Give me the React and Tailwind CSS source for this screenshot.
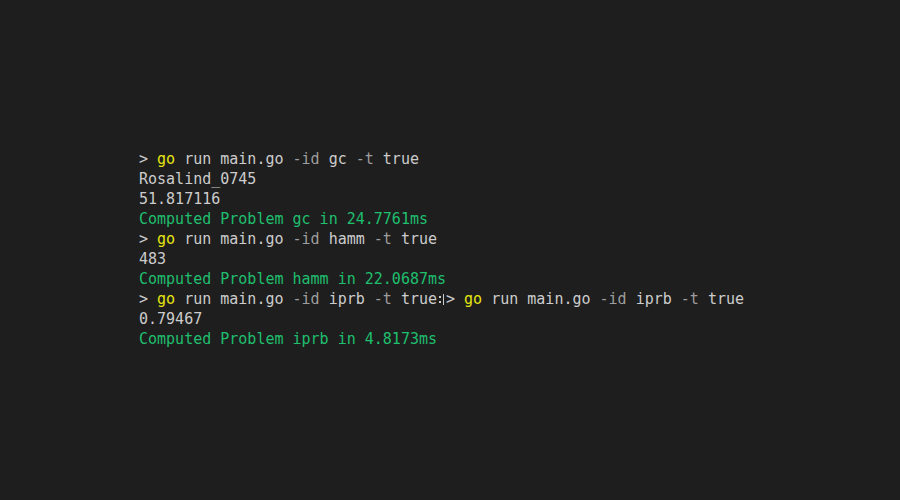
export default function App() {
  const Cmd = ({ id }) => (
    <>
      <span className="text-[#cccccc]">&gt; </span>
      <span className="text-[#e5e510]">go</span>
      <span className="text-[#cccccc]"> run main.go </span>
      <span className="text-[#9d9d9d]">-id</span>
      <span className="text-[#cccccc]"> {id} </span>
      <span className="text-[#9d9d9d]">-t</span>
      <span className="text-[#cccccc]"> true</span>
    </>
  );
  const green = "text-[#1fbf6e]";
  return (
    <div
      className="w-[900px] h-[500px] bg-[#1e1e1e] pt-[149px] pl-[139px] text-[15px] leading-[20px] text-[#cccccc] whitespace-pre"
      style={{ fontFamily: '"DejaVu Sans Mono", "Liberation Mono", monospace' }}
    >
      <div><Cmd id="gc" /></div>
      <div>Rosalind_0745</div>
      <div>51.817116</div>
      <div className={green}>Computed Problem gc in 24.7761ms</div>
      <div><Cmd id="hamm" /></div>
      <div>483</div>
      <div className={green}>Computed Problem hamm in 22.0687ms</div>
      <div className="flex">
        <span><Cmd id="iprb" /></span>
        <span className="inline-flex w-[9px] items-center justify-center">
          <span className="relative inline-block w-[7px] h-[11px]">
            <span className="absolute left-[1px] top-[2px] w-[2px] h-[2px] bg-[#cccccc]" />
            <span className="absolute left-[1px] top-[7px] w-[2px] h-[2px] bg-[#cccccc]" />
            <span className="absolute right-[1px] top-0 w-[1px] h-[11px] bg-[#cccccc]" />
          </span>
        </span>
        <span><Cmd id="iprb" /></span>
      </div>
      <div>0.79467</div>
      <div className={green}>Computed Problem iprb in 4.8173ms</div>
    </div>
  );
}
